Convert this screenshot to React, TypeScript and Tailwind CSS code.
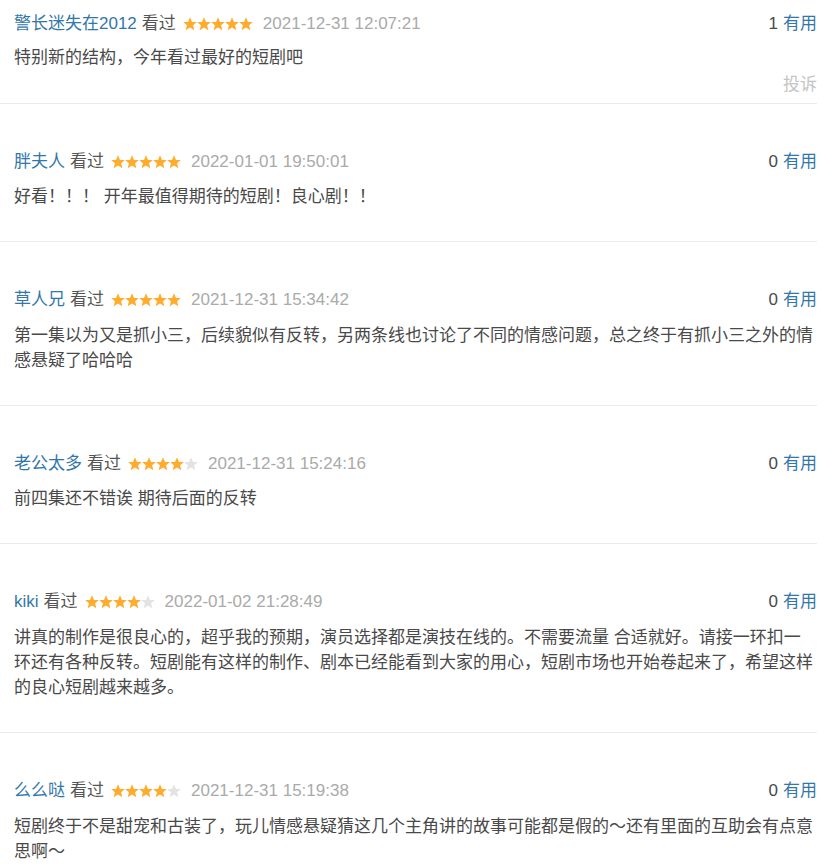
import React from "react"

type Comment = {
  name: string
  stars: number
  date: string
  votes: number
  text: string
}

const comments: Comment[] = [
  { name: "警长迷失在2012", stars: 5, date: "2021-12-31 12:07:21", votes: 1, text: "特别新的结构，今年看过最好的短剧吧" },
  { name: "胖夫人", stars: 5, date: "2022-01-01 19:50:01", votes: 0, text: "好看！！！ 开年最值得期待的短剧！良心剧！！" },
  {
    name: "草人兄",
    stars: 5,
    date: "2021-12-31 15:34:42",
    votes: 0,
    text: "第一集以为又是抓小三，后续貌似有反转，另两条线也讨论了不同的情感问题，总之终于有抓小三之外的情感悬疑了哈哈哈",
  },
  { name: "老公太多", stars: 4, date: "2021-12-31 15:24:16", votes: 0, text: "前四集还不错诶 期待后面的反转" },
  {
    name: "kiki",
    stars: 4,
    date: "2022-01-02 21:28:49",
    votes: 0,
    text: "讲真的制作是很良心的，超乎我的预期，演员选择都是演技在线的。不需要流量 合适就好。请接一环扣一环还有各种反转。短剧能有这样的制作、剧本已经能看到大家的用心，短剧市场也开始卷起来了，希望这样的良心短剧越来越多。",
  },
  {
    name: "么么哒",
    stars: 4,
    date: "2021-12-31 15:19:38",
    votes: 0,
    text: "短剧终于不是甜宠和古装了，玩儿情感悬疑猜这几个主角讲的故事可能都是假的～还有里面的互助会有点意思啊～",
  },
]

function Star({ on }: { on: boolean }) {
  return (
    <svg width="14" height="14" viewBox="0 0 14 14">
      <polygon
        points="7,0.2 9,4.9 13.8,5.1 10.1,8.3 11.3,13.2 7,10.6 2.7,13.2 3.9,8.3 0.2,5.1 5,4.9"
        fill={on ? "#ffac2d" : "#e3e3e3"}
      />
    </svg>
  )
}

export default function App() {
  return (
    <div className="min-h-screen bg-white font-['Liberation_Sans','Noto_Sans_CJK_SC',sans-serif] text-[17px]">
      <div className="w-[817px]">
        {comments.map((c, i) => (
          <div
            key={c.name}
            className={`relative border-b border-[#ebebeb] pl-[14px] ${i === 0 ? "pt-[12px] pb-[33px]" : "pt-[46px] pb-[32px]"}`}
          >
            {/* header */}
            <div className="flex h-[24px] items-center">
              <span className="text-[#3377aa]">{c.name}</span>
              <span className="ml-[5px] text-[#555]">看过</span>
              <span className="ml-[7px] flex">
                {[0, 1, 2, 3, 4].map((s) => (
                  <Star key={s} on={s < c.stars} />
                ))}
              </span>
              <span className="ml-[10px] text-[#aaa]">{c.date}</span>
              <span className="ml-auto">
                <span className="text-[#494949]">{c.votes}</span>
                <span className="ml-[5px] text-[#3377aa]">有用</span>
              </span>
            </div>

            {/* body */}
            <p className={`text-[#494949] ${i === 0 ? "mt-[10px]" : "mt-[11px]"} ${c.text.length > 40 ? "leading-[25px]" : "leading-[24px]"}`}>
              {c.text}
            </p>

            {i === 0 && (
              <span className="absolute bottom-[6px] right-0 leading-[24px] text-[#c4c4c4]">投诉</span>
            )}
          </div>
        ))}
      </div>
    </div>
  )
}
